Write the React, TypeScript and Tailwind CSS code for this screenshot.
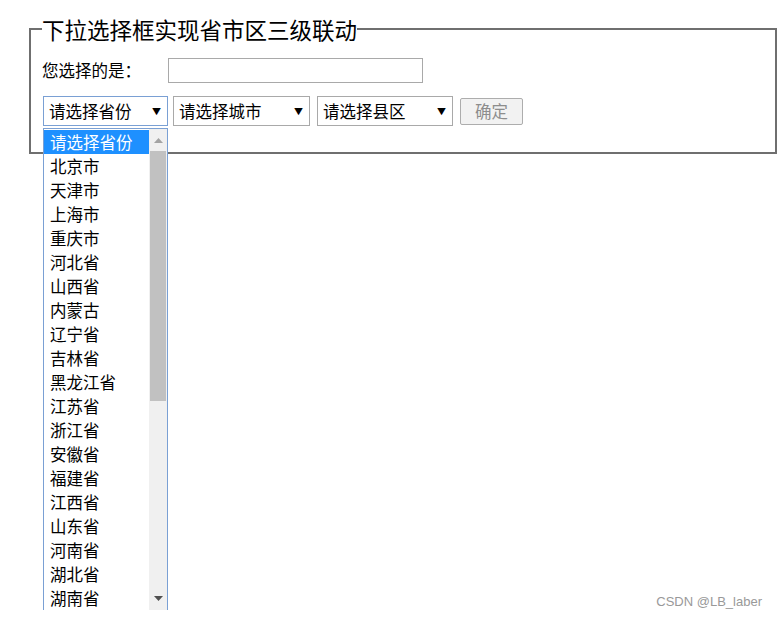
import React from 'react';

const provinces = [
    '请选择省份', '北京市', '天津市', '上海市', '重庆市', '河北省', '山西省', '内蒙古', '辽宁省', '吉林省',
    '黑龙江省', '江苏省', '浙江省', '安徽省', '福建省', '江西省', '山东省', '河南省', '湖北省', '湖南省',
];

const font = { fontFamily: '"Noto Sans CJK SC", "Liberation Sans", sans-serif' };

function FakeSelect({ label, width, focused }: { label: string; width: string; focused?: boolean }) {
    return (
        <div
            className={`flex items-center justify-between h-[30px] pl-[5px] pr-[6px] bg-white border text-[16.5px] text-black ${width} ${focused ? 'border-[#7aa0d4]' : 'border-[#a9a9a9]'}`}
        >
            <span className="leading-none">{label}</span>
            <span className="text-[9px] leading-none">▼</span>
        </div>
    );
}

export default function App() {
    return (
        <div className="relative w-[777px] h-[619px] bg-white text-black overflow-hidden" style={font}>
            <fieldset className="ml-[29px] mt-[16px] w-[748px] h-[138px] border-2 border-[#6f6f6f] pl-[11px] pr-3">
                <legend className="text-[22.5px] leading-[26px] px-0">下拉选择框实现省市区三级联动</legend>

                <div className="flex items-center mt-[16px] text-[16.5px]">
                    <span className="w-[126px]">您选择的是：</span>
                    <div className="w-[255px] h-[25px] border border-[#a9a9a9] bg-white" />
                </div>

                <div className="flex items-center mt-[14px] ml-px -translate-y-px">
                    <FakeSelect label="请选择省份" width="w-[125px]" focused />
                    <div className="ml-[5px]">
                        <FakeSelect label="请选择城市" width="w-[137px]" />
                    </div>
                    <div className="ml-[7px]">
                        <FakeSelect label="请选择县区" width="w-[136px]" />
                    </div>
                    <button className="ml-[7px] w-[63px] h-[27px] border border-[#adadad] bg-[#f2f2f2] rounded-[2px] text-[16.5px] text-[#8d8d8d] leading-none">
                        确定
                    </button>
                </div>
            </fieldset>

            {/* open dropdown list */}
            <div className="absolute left-[43px] top-[128px] w-[125px] h-[482px] border-x border-t border-[#7aa0d4] bg-white overflow-hidden flex">
                <div className="flex-1 pt-[1px]">
                    {provinces.map((p, i) => (
                        <div
                            key={p}
                            className={`h-[24px] pl-[6px] text-[16.5px] leading-[24px] ${i === 0 ? 'bg-[#1e90ff] text-white' : 'text-black'}`}
                        >
                            {p}
                        </div>
                    ))}
                </div>
                <div className="w-[18px] bg-[#f0f0f0] flex flex-col items-center">
                    <div className="h-[22px] flex items-center justify-center">
                        <svg width="9" height="5" viewBox="0 0 9 5"><path d="M0 5 L4.5 0 L9 5 Z" fill="#a3a3a3" /></svg>
                    </div>
                    <div className="w-[16px] h-[250px] bg-[#c1c1c1]" />
                    <div className="flex-1" />
                    <div className="h-[24px] flex items-start justify-center pt-[10px]">
                        <svg width="9" height="5" viewBox="0 0 9 5"><path d="M0 0 L4.5 5 L9 0 Z" fill="#505050" /></svg>
                    </div>
                </div>
            </div>

            <div className="absolute right-[15px] bottom-[8px] text-[13px] text-[#999999]" style={{ fontFamily: '"Liberation Sans", Arial, sans-serif' }}>
                CSDN @LB_laber
            </div>
        </div>
    );
}
